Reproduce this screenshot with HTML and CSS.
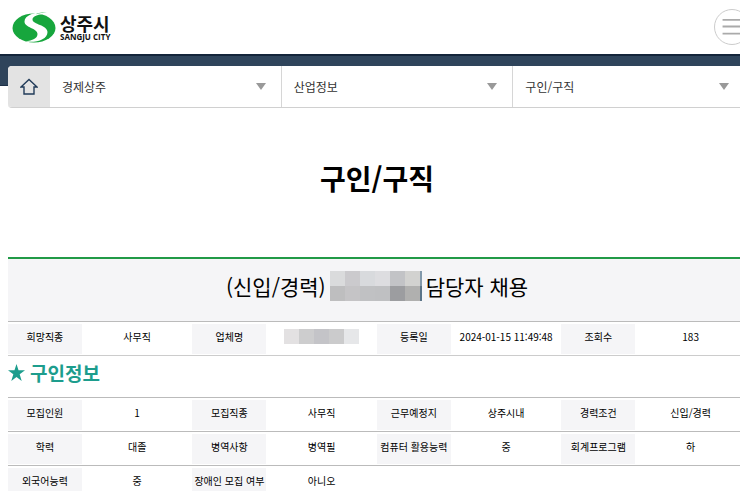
FILE: index.html
```html
<!DOCTYPE html>
<html lang="ko">
<head>
<meta charset="utf-8">
<meta name="viewport" content="width=device-width, initial-scale=1">
<title>구인/구직 - 상주시</title>
<link rel="stylesheet" href="styles.css">
</head>
<body>
<header class="site-header">
  <a class="logo" href="#" aria-label="상주시 SANGJU CITY">
    <svg class="logo-mark" viewBox="0 0 44 31" aria-hidden="true">
      <ellipse cx="22" cy="16" rx="21.5" ry="14.500" fill="#17a63d"/>
      <path d="M34 0C23 0 12.500 3 12.500 9.500c0 6.500 13 6.500 13 12.500 0 4.500-5 6.500-12 7.500 11 1.500 22-2 22-9.500 0-7-15-7.500-15-12.500 0-3.500 6-5.500 15-6z" fill="#fff"/>
      <path d="M25 1.500C29 .3 32 .2 35 .6c-4 .1-8 .8-11 1.700z" fill="#17a63d"/>
    </svg>
    <span class="logo-text">
      <span class="logo-ko">상주시</span>
      <span class="logo-en">SANGJU CITY</span>
    </span>
  </a>
  <button class="menu-button" type="button" aria-label="전체메뉴">
    <svg viewBox="0 0 36 36" aria-hidden="true"><path d="M8 10.500h20M8 17.500h20M8 25h20" stroke="#aaa" stroke-width="2"/></svg>
  </button>
</header>
<div class="band"></div>
<div class="page">
  <nav class="location" aria-label="현재 위치">
    <a class="home" href="#" aria-label="홈">
      <svg viewBox="0 0 18 17" aria-hidden="true"><path d="M1 9L9 1.500 17 9H14v7H4V9z" fill="none" stroke="#213b59" stroke-width="1.400"/></svg>
    </a>
    <button class="crumb" type="button">경제상주<span class="arrow"></span></button>
    <button class="crumb" type="button">산업정보<span class="arrow"></span></button>
    <button class="crumb" type="button">구인/구직<span class="arrow"></span></button>
  </nav>
  <main>
    <h1>구인/구직</h1>
    <h2 class="post-title">(신입/경력)
      <svg class="mosaic-large" viewBox="0 0 92 30" shape-rendering="crispEdges" aria-hidden="true">
        <path fill="#dadbdc" d="M0 0h15v15H0z"/><path fill="#cbcacd" d="M15 0h15v15H15z"/><path fill="#d8dadd" d="M30 0h15v15H30z"/><path fill="#dddde0" d="M45 0h15v15H45z"/><path fill="#c2c3c6" d="M60 0h15v15H60z"/><path fill="#d2d2d0" d="M75 0h15v15H75z"/>
        <path fill="#bebebf" d="M0 15h15v15H0z"/><path fill="#c5c4c6" d="M15 15h15v15H15z"/><path fill="#c0c1c3" d="M30 15h15v15H30z"/><path fill="#bfc0c2" d="M45 15h15v15H45z"/><path fill="#9c9da0" d="M60 15h15v15H60z"/><path fill="#b0b0af" d="M75 15h15v15H75z"/>
        <path fill="#8299ab" d="M90 0h2v15h-2z"/><path fill="#5b7488" d="M90 15h2v15h-2z"/>
      </svg>
      담당자 채용</h2>
    <table class="info">
      <tr>
        <th scope="row">희망직종</th><td>사무직</td>
        <th scope="row">업체명</th><td>
          <svg class="mosaic-small" viewBox="0 0 75 15" shape-rendering="crispEdges" aria-hidden="true"><path fill="#e3e1e2" d="M0 0h15v15H0z"/><path fill="#cdcdce" d="M15 0h15v15H15z"/><path fill="#c4c4c8" d="M30 0h15v15H30z"/><path fill="#cbcbcc" d="M45 0h15v15H45z"/><path fill="#e6e7e9" d="M60 0h15v15H60z"/></svg></td>
        <th scope="row">등록일</th><td>2024-01-15 11:49:48</td>
        <th scope="row">조회수</th><td>183</td>
      </tr>
    </table>
    <h3><svg class="star" viewBox="0 0 16 16" aria-hidden="true"><path d="M8 0l1.900 5.900H16l-5 3.700L12.900 16 8 12.200 3.100 16 5 9.600 0 5.900h6.100z" fill="#1d9d8d"/></svg>구인정보</h3>
    <table class="info">
      <tr>
        <th scope="row">모집인원</th><td>1</td>
        <th scope="row">모집직종</th><td>사무직</td>
        <th scope="row">근무예정지</th><td>상주시내</td>
        <th scope="row">경력조건</th><td>신입/경력</td>
      </tr>
      <tr>
        <th scope="row">학력</th><td>대졸</td>
        <th scope="row">병역사항</th><td>병역필</td>
        <th scope="row">컴퓨터 활용능력</th><td>중</td>
        <th scope="row">회계프로그램</th><td>하</td>
      </tr>
      <tr>
        <th scope="row">외국어능력</th><td>중</td>
        <th scope="row">장애인 모집 여부</th><td>아니오</td>
        <td colspan="4"></td>
      </tr>
    </table>
  </main>
</div>
</body>
</html>
```
FILE: styles.css
```css
* {
  box-sizing: border-box;
}

body {
  margin: 0;
  overflow-x: hidden;
  background: #fff;
  color: #000;
  font-family: "Noto Sans CJK KR", sans-serif;
}

button {
  font: inherit;
  cursor: pointer;
}

.site-header {
  display: flex;
  align-items: center;
  justify-content: space-between;
  height: 54px;
  padding-left: 12px;
}

.logo {
  display: flex;
  align-items: center;
  gap: 4px;
  color: #111;
  text-decoration: none;
}

.logo-mark {
  width: 44px;
  height: 31px;
}

.logo-text {
  display: flex;
  flex-direction: column;
  padding-top: 2px;
}

.logo-ko {
  font-size: 18px;
  font-weight: 700;
  line-height: 18px;
}

.logo-en {
  font-family: "Open Sans", sans-serif;
  font-size: 8px;
  font-weight: 700;
  line-height: 10px;
}

.menu-button {
  flex: none;
  width: 36px;
  height: 36px;
  margin-right: -10px;
  padding: 0;
  border: 1px solid #ccc;
  border-radius: 50%;
  background: #fff;
}

.menu-button svg {
  display: block;
}

.band {
  height: 32px;
  border-top: 2px solid #14253a;
  border-bottom: 1px solid #1d3047;
  background: #2f445b;
}

.page {
  margin: -20px -6px 0 8px;
}

.location {
  display: flex;
  height: 42px;
  margin-right: 1px;
  border-bottom: 1px solid #d0d0d0;
  border-radius: 4px;
  background: #fff;
  overflow: hidden;
}

.home {
  display: flex;
  flex: none;
  align-items: center;
  justify-content: center;
  width: 42px;
  background: #e3e3e3;
}

.home svg {
  width: 18px;
  height: 17px;
}

.crumb {
  display: flex;
  flex: 1;
  align-items: center;
  justify-content: space-between;
  padding: 0 15px 0 12px;
  border: 0;
  border-right: 1px solid #d6d6d6;
  background: #fff;
  color: #333;
  font-size: 12px;
}

.arrow {
  border: 5px solid transparent;
  border-top: 7px solid #999;
  border-bottom: 0;
}

h1 {
  margin: 49px 0 57px;
  font-size: 28px;
  font-weight: 700;
  line-height: 43px;
  text-align: center;
}

.post-title {
  display: flex;
  align-items: center;
  justify-content: center;
  gap: 4px;
  height: 64px;
  margin: 0;
  padding-bottom: 8px;
  border-top: 2px solid #219a47;
  background: #f5f5f7;
  font-size: 21px;
  font-weight: 400;
}

.mosaic-large {
  width: 92px;
  height: 30px;
}

.mosaic-small {
  display: block;
  width: 75px;
  height: 15px;
  margin: 0 auto;
}

.info {
  width: 100%;
  border-collapse: collapse;
  border-bottom: 1px solid #ccc;
  table-layout: fixed;
  font-size: 10px;
  line-height: 16px;
  text-align: center;
}

.info th,
.info td {
  height: 34px;
  padding: 0 0 4px;
  border-top: 1px solid #bbb;
  font-weight: 400;
  white-space: nowrap;
}

.info th {
  width: 10%;
  background: #f5f5f7;
  box-shadow: inset 0 2px #fff, inset 0 -1px #fff;
}

.info td {
  width: 15%;
}

h3 {
  display: flex;
  align-items: center;
  gap: 5px;
  height: 41px;
  margin: 0;
  padding-bottom: 8px;
  color: #1d9d8d;
  font-size: 19px;
  font-weight: 700;
}

.star {
  width: 17px;
  height: 17px;
}
```
